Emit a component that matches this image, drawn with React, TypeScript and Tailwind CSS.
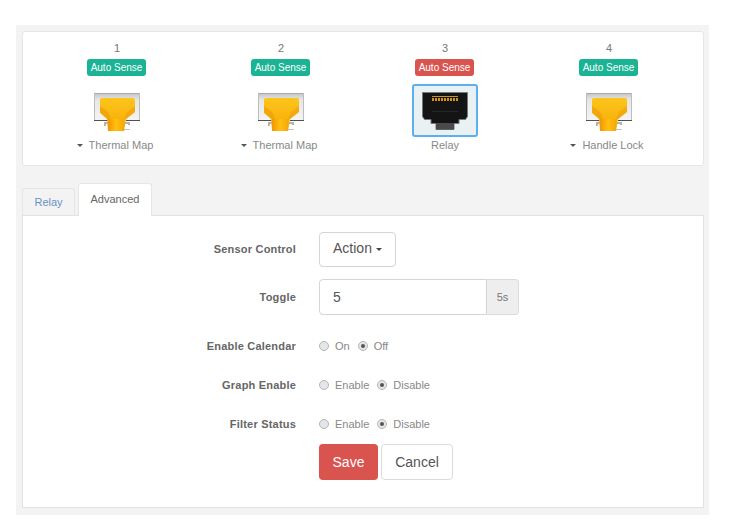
const ports = [
  { num: '1', label: 'Thermal Map', active: false },
  { num: '2', label: 'Thermal Map', active: false },
  { num: '3', label: 'Relay', active: true },
  { num: '4', label: 'Handle Lock', active: false },
];

function Caret({ className }: { className?: string }) {
  return (
    <svg width="6" height="3" viewBox="0 0 6 3" className={className}>
      <path d="M0 0h6L3 3z" fill="currentColor" />
    </svg>
  );
}

function YellowPort() {
  return (
    <svg width="46" height="38" viewBox="0 0 46 38">
      <defs>
        <linearGradient id="wall" x1="0" y1="0" x2="0" y2="1">
          <stop offset="0" stopColor="#c4c4c4" />
          <stop offset="0.25" stopColor="#e6e6e6" />
          <stop offset="1" stopColor="#f4f4f4" />
        </linearGradient>
        <linearGradient id="plug" x1="0" y1="0" x2="0" y2="1">
          <stop offset="0" stopColor="#fdc51c" />
          <stop offset="0.6" stopColor="#f9b40e" />
          <stop offset="1" stopColor="#f5a208" />
        </linearGradient>
        <linearGradient id="neck" x1="0" y1="0" x2="1" y2="0">
          <stop offset="0" stopColor="#f29604" />
          <stop offset="0.5" stopColor="#ffc00f" />
          <stop offset="1" stopColor="#f6a908" />
        </linearGradient>
      </defs>
      <rect x="0" y="0" width="46" height="27" fill="url(#wall)" />
      <path d="M0 0h46v1H0z" fill="#a9a9a9" />
      <path d="M0 0h1v27H0zM45 0h1v27h-1z" fill="#bdbdbd" />
      <path d="M0 27h14v1H0zM32 27h14v1H32z" fill="#55504a" />
      <path d="M10 29h4v2h-2v2h-2zM36 29h-5v2h3v1h2z" fill="#b5b5b5" />
      <path d="M30 36h6v1h-6z" fill="#c4c4c4" />
      <path d="M6 7q0-2 2-2h31q2 0 2 2v12l-9 7-2 12H14l-1-12-7-6z" fill="url(#plug)" />
      <path d="M6 13l8 6 3 7-3 0-8-7z" fill="#e8930a" opacity="0.5" />
      <path d="M41 13l-8 6-3 7h2l9-7z" fill="#e8930a" opacity="0.4" />
      <path d="M14 26h16l-1 12H14z" fill="url(#neck)" />
    </svg>
  );
}

function BlackPort() {
  return (
    <svg width="46" height="38" viewBox="0 0 46 38">
      <path d="M0.500 0.500h45v24l-2 3H37v4h-5v6H14v-6H9v-4H2.500l-2-3z" fill="#141414" stroke="#73787a" strokeWidth="1" />
      <path d="M14 31h18v6.500H14z" fill="#4a4a4a" />
      <path d="M10 19h26v1H10z" fill="#262626" />
      <g fill="#cf9420">
        <rect x="10" y="4" width="26" height="1" />
        <rect x="10" y="6" width="2" height="3" />
        <rect x="13" y="6" width="2" height="3" />
        <rect x="16" y="6" width="2" height="3" />
        <rect x="19" y="6" width="2" height="3" />
        <rect x="22" y="6" width="2" height="3" />
        <rect x="25" y="6" width="2" height="3" />
        <rect x="28" y="6" width="2" height="3" />
        <rect x="31" y="6" width="2" height="3" />
        <rect x="34" y="6" width="2" height="3" />
      </g>
    </svg>
  );
}

function Radio({ label, checked }: { label: string; checked?: boolean }) {
  return (
    <label className="flex items-center">
      <span className="w-[10px] h-[10px] rounded-full border border-[#b5b5b5] bg-[#e6e6e6] flex items-center justify-center">
        {checked && <span className="w-[4px] h-[4px] rounded-full bg-[#555]" />}
      </span>
      <span className="ml-[6px] text-[11px] text-[#888]">{label}</span>
    </label>
  );
}

function RadioRow({ title, a, b, className }: { title: string; a: string; b: string; className?: string }) {
  return (
    <div className={`flex items-center h-[20px] ${className ?? ''}`}>
      <div className="w-[273px] text-right text-[11px] font-bold tracking-[0.2px] text-[#666]">{title}</div>
      <div className="ml-[23px] flex items-center gap-[8px]">
        <Radio label={a} />
        <Radio label={b} checked />
      </div>
    </div>
  );
}

export default function App() {
  return (
    <div className="w-[737px] h-[527px] bg-white pt-[25px] pl-[16px] font-['Liberation_Sans',Arial,sans-serif]">
      <div className="w-[693px] h-[490px] bg-[#f3f3f3] pt-[6px] px-[6px]">
        <div className="w-[682px] h-[135px] bg-white rounded-[3px] border border-[#e6e6e6] px-[12px] pt-[9px] grid grid-cols-4">
          {ports.map((p, i) => (
            <div key={i} className="flex flex-col items-center">
              <div className="text-[11px] leading-[14px] text-[#777]">{p.num}</div>
              <span
                className={`mt-[4px] mr-[1px] w-[59px] h-[17px] rounded-[3px] text-white text-[10px] leading-[17px] text-center ${
                  p.active ? 'bg-[#d9534f]' : 'bg-[#1ab394]'
                }`}
              >
                Auto Sense
              </span>
              {p.active ? (
                <div className="mt-[8px] mr-[1px] w-[66px] h-[53px] rounded-[3px] border-2 border-[#5bb0f0] bg-[#e9f1f3] flex items-center justify-center">
                  <BlackPort />
                </div>
              ) : (
                <div className="mt-[17px] mb-[6px] h-[38px]">
                  <YellowPort />
                </div>
              )}
              <div className={`mt-[1px] flex items-center text-[11px] leading-[14px] text-[#888] ${p.active ? '' : 'pr-[4px]'}`}>
                {!p.active && <Caret className="mr-[6px] text-[#555]" />}
                {p.label}
              </div>
            </div>
          ))}
        </div>

        <div className="mt-[17px] flex items-end h-[32px]">
          <div className="w-[53px] h-[27px] bg-[#f3f3f3] border border-b-0 border-[#e6e6e6] rounded-t-[3px] text-[11px] leading-[27px] text-center text-[#6a8fc9]">
            Relay
          </div>
          <div className="ml-[3px] w-[74px] h-[33px] bg-white border border-b-0 border-[#e6e6e6] rounded-t-[3px] text-[11px] leading-[30px] text-center text-[#666] relative top-[1px]">
            Advanced
          </div>
        </div>

        <div className="w-[682px] h-[293px] bg-white border border-[#e2e2e2] pt-[16px]">
          <div className="flex items-center h-[35px]">
            <div className="w-[273px] text-right text-[11px] font-bold tracking-[0.2px] text-[#666]">Sensor Control</div>
            <button className="ml-[23px] w-[77px] h-[35px] pb-[2px] rounded-[4px] border border-[#d5d5d5] bg-white flex items-center justify-center text-[14px] text-[#555]">
              Action
              <Caret className="ml-[4px] mt-[2px] text-[#444]" />
            </button>
          </div>

          <div className="flex items-center h-[36px] mt-[12px]">
            <div className="w-[273px] pt-[1px] text-right text-[11px] font-bold tracking-[0.2px] text-[#666]">Toggle</div>
            <div className="ml-[23px] flex h-[36px] w-[200px]">
              <div className="w-[168px] border border-[#d5d5d5] rounded-l-[4px] pl-[13px] text-[14px] leading-[34px] text-[#555]">5</div>
              <div className="w-[32px] border border-l-0 border-[#dcdcdc] rounded-r-[4px] bg-[#eeeeee] text-[11px] leading-[34px] text-center text-[#777]">5s</div>
            </div>
          </div>

          <RadioRow title="Enable Calendar" a="On" b="Off" className="mt-[21px]" />
          <RadioRow title="Graph Enable" a="Enable" b="Disable" className="mt-[19px]" />
          <RadioRow title="Filter Status" a="Enable" b="Disable" className="mt-[19px]" />

          <div className="mt-[10px] ml-[296px] flex gap-[3px]">
            <button className="w-[59px] h-[36px] rounded-[4px] bg-[#d9534f] text-white text-[14px]">Save</button>
            <button className="w-[72px] h-[36px] rounded-[4px] border border-[#dcdcdc] bg-white text-[14px] text-[#555]">Cancel</button>
          </div>
        </div>
      </div>
    </div>
  );
}
